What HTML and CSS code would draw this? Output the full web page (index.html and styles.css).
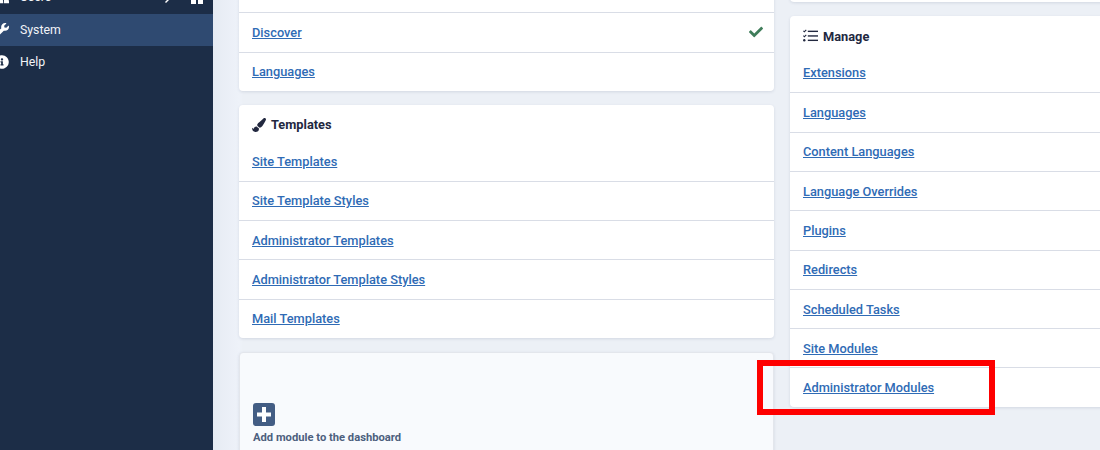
FILE: index.html
```html
<!DOCTYPE html>
<html lang="en">

<head>
    <meta charset="UTF-8">
    <title>System Dashboard</title>
    <link rel="stylesheet" href="styles.css">
</head>

<body>
    <div class="wrapper">
        <!-- sidebar menu -->
        <nav class="sidebar">
            <a class="menu-item" href="#">
                <svg class="menu-icon" viewBox="0 0 512 512"><circle cx="150" cy="150" r="110"/><circle cx="360" cy="170" r="90"/><path d="M0 440c0-100 60-180 150-180s150 80 150 180v40H0zM330 480v-60c0-50-15-100-50-140 25-10 50-15 80-15 90 0 152 70 152 170v45z"/></svg>
                <span class="menu-label">Users</span>
                <svg class="menu-arrow" viewBox="0 0 12 12"><path d="M2 11l5-5 1 1-5 5z"/><path d="M7 4l2-2 1 1-2 2z"/></svg>
                <span class="menu-tiles"><i></i><i></i></span>
            </a>
            <a class="menu-item active" href="#">
                <svg class="menu-icon" viewBox="0 0 512 512"><path d="M507.73 109.1c-2.24-9.03-13.54-12.09-20.12-5.51l-74.36 74.36-67.88-11.31-11.31-67.88 74.36-74.36c6.62-6.62 3.43-17.9-5.66-20.16-47.38-11.74-99.55.91-136.58 37.93-39.64 39.64-50.55 97.1-34.05 147.2L18.74 402.76c-24.99 24.99-24.99 65.51 0 90.5 24.99 24.99 65.51 24.99 90.5 0l213.21-213.21c50.12 16.71 107.47 5.68 147.37-34.22 37.07-37.07 49.7-89.32 37.91-136.73zM64 472c-13.25 0-24-10.75-24-24 0-13.26 10.75-24 24-24s24 10.74 24 24c0 13.25-10.75 24-24 24z"/></svg>
                <span class="menu-label">System</span>
            </a>
            <a class="menu-item" href="#">
                <svg class="menu-icon" viewBox="0 0 512 512"><path d="M256 8C119.043 8 8 119.083 8 256c0 136.997 111.043 248 248 248s248-111.003 248-248C504 119.083 392.957 8 256 8zm0 110c23.196 0 42 18.804 42 42s-18.804 42-42 42-42-18.804-42-42 18.804-42 42-42zm56 254c0 6.627-5.373 12-12 12h-88c-6.627 0-12-5.373-12-12v-24c0-6.627 5.373-12 12-12h12v-64h-12c-6.627 0-12-5.373-12-12v-24c0-6.627 5.373-12 12-12h64c6.627 0 12 5.373 12 12v100h12c6.627 0 12 5.373 12 12v24z"/></svg>
                <span class="menu-label">Help</span>
            </a>
        </nav>

        <main class="content">
            <div class="col col-left">
                <section class="card card-top">
                    <div class="row"><a href="#">Discover</a>
                        <svg class="check" viewBox="0 0 512 512"><path d="M173.898 439.404l-166.4-166.4c-9.997-9.997-9.997-26.206 0-36.204l36.203-36.204c9.997-9.998 26.207-9.998 36.204 0L192 312.69 432.095 72.596c9.997-9.997 26.207-9.997 36.204 0l36.203 36.204c9.997 9.997 9.997 26.206 0 36.204l-294.4 294.401c-9.998 9.997-26.207 9.997-36.204-.001z"/></svg>
                    </div>
                    <div class="row"><a href="#">Languages</a></div>
                </section>

                <section class="card">
                    <h2 class="card-title">
                        <svg class="title-icon" viewBox="0 0 512 512"><path d="M167.02 309.34c-40.12 2.58-76.53 17.86-97.19 72.3-2.35 6.21-8 9.98-14.59 9.98-11.11 0-45.46-27.67-55.25-34.35C0 439.62 37.93 512 128 512c75.86 0 128-43.77 128-120.19 0-3.11-.65-6.08-.97-9.13l-88.01-73.34zM457.89 0c-15.16 0-29.37 6.71-40.21 16.45C213.27 199.05 192 203.34 192 257.09c0 13.7 3.25 26.76 8.73 38.7l63.82 53.18c7.21 1.8 14.64 3.03 22.39 3.03 62.11 0 98.11-45.47 211.16-256.46 7.38-14.35 13.9-29.85 13.9-45.99C512 20.64 486 0 457.89 0z"/></svg>
                        Templates
                    </h2>
                    <div class="row"><a href="#">Site Templates</a></div>
                    <div class="row"><a href="#">Site Template Styles</a></div>
                    <div class="row"><a href="#">Administrator Templates</a></div>
                    <div class="row"><a href="#">Administrator Template Styles</a></div>
                    <div class="row"><a href="#">Mail Templates</a></div>
                </section>

                <section class="card add-module">
                    <svg class="add-icon" viewBox="0 0 22 23"><rect width="22" height="23" rx="3"/><path d="M9 4h4v5.500h5v4h-5V19H9v-5.500H4v-4h5z"/></svg>
                    <span class="add-label">Add module to the dashboard</span>
                </section>
            </div>

            <div class="col col-right">
                <div class="card card-stub"></div>
                <section class="card">
                    <h2 class="card-title">
                        <svg class="title-icon tasks" viewBox="0 0 14 12"><path d="M0 1.500l.7-.7.6.6L2.700 0l.7.7-2.100 2.100zM0 6l.7-.7.6.6 1.400-1.400.7.7-2.100 2.100z"/><circle cx="1.200" cy="10" r="1.100"/><rect x="4.500" y="1" width="9.500" height="1.300"/><rect x="4.500" y="5.300" width="9.500" height="1.300"/><rect x="4.500" y="9.400" width="9.500" height="1.300"/></svg>
                        Manage
                    </h2>
                    <div class="row"><a href="#">Extensions</a></div>
                    <div class="row"><a href="#">Languages</a></div>
                    <div class="row"><a href="#">Content Languages</a></div>
                    <div class="row"><a href="#">Language Overrides</a></div>
                    <div class="row"><a href="#">Plugins</a></div>
                    <div class="row"><a href="#">Redirects</a></div>
                    <div class="row"><a href="#">Scheduled Tasks</a></div>
                    <div class="row"><a href="#">Site Modules</a></div>
                    <div class="row"><a href="#">Administrator Modules</a></div>
                </section>
            </div>
        </main>
    </div>

    <!-- red marker around the highlighted link -->
    <div class="highlight"></div>
</body>

</html>
```

FILE: styles.css
```css
* {
    box-sizing: border-box;
}

html,
body {
    margin: 0;
    height: 450px;
    overflow: hidden;
}

body {
    position: relative;
    font-family: Roboto, "Liberation Sans", sans-serif;
    font-size: 12.8px;
    background-color: #eceff4;
    color: #22283f;
}

.wrapper {
    display: flex;
    height: 450px;
    overflow: hidden;
}

/* sidebar */
.sidebar {
    flex: none;
    width: 213px;
    height: 450px;
    background-color: #1c2d47;
}

.menu-item {
    display: flex;
    align-items: center;
    height: 32px;
    font-size: 12.3px;
    color: #f2f4f8;
    text-decoration: none;
}

.menu-item:first-child {
    height: 34px;
    margin-top: -20px;
}

.menu-item.active {
    background-color: #2f4a71;
}

.menu-icon {
    flex: none;
    width: 14px;
    height: 14px;
    margin-left: -5px;
    fill: #fff;
}

.menu-label {
    margin-left: 11px;
    flex: 1;
    padding-bottom: 1px;
}

.menu-arrow {
    width: 12px;
    height: 12px;
    margin-right: 16px;
    fill: #fff;
}

.menu-tiles {
    display: flex;
    gap: 2px;
    margin-right: 10px;
}

.menu-tiles i {
    width: 5px;
    height: 14px;
    background-color: #fff;
}

/* main area */
.content {
    flex: 1;
    display: flex;
    align-items: flex-start;
    gap: 16px;
    padding-left: 26px;
    background: linear-gradient(to right, #e6ebf3, #eef2f9 26px, #ecf0f6 30px);
    min-width: 0;
}

.col {
    flex: none;
}

.col-left {
    width: 535px;
    margin-top: -28px;
}

.col-right {
    width: 400px;
    margin-top: -39.6px;
}

.card {
    background-color: #fff;
    border-radius: 4px;
    margin-bottom: 14px;
    box-shadow: 0 1px 3px rgba(30, 50, 90, 0.12);
}

.card-top {
    padding-top: 40px;
    margin-bottom: 13.6px;
    border-radius: 0 0 4px 4px;
}

.card-top .row {
    height: 39.6px;
}

.card-stub {
    height: 42px;
}

.card-title {
    display: flex;
    align-items: center;
    gap: 5px;
    height: 36.7px;
    margin: 0;
    padding: 3px 13px 0;
    font-size: 12.8px;
    font-weight: 700;
    color: #22283f;
}

.title-icon {
    width: 14px;
    height: 14px;
    fill: #22283f;
}

.title-icon.tasks {
    width: 15px;
}

.row {
    display: flex;
    align-items: center;
    justify-content: space-between;
    height: 39.3px;
    padding: 0 13px;
    border-top: 1px solid #d9dde6;
}

.card-title+.row {
    border-top: 0;
}

.row a {
    color: #2f6bb5;
    font-weight: 500;
}

.check {
    width: 14px;
    height: 14px;
    margin-right: -2px;
    fill: #3f7d5a;
}

.add-module {
    display: flex;
    flex-direction: column;
    align-items: flex-start;
    height: 140px;
    padding: 50px 13px 0;
    background-color: #f8fafd;
    border: 1px solid #e3e6ec;
}

.add-icon {
    width: 22px;
    height: 23px;
    fill: #435d84;
}

.add-icon path {
    fill: #fff;
}

.add-label {
    margin-top: 5px;
    font-size: 11.2px;
    font-weight: 700;
    color: #4d5f7e;
}

.highlight {
    position: absolute;
    left: 757px;
    top: 360px;
    width: 238px;
    height: 55px;
    border: 6px solid #fe0000;
}
```
